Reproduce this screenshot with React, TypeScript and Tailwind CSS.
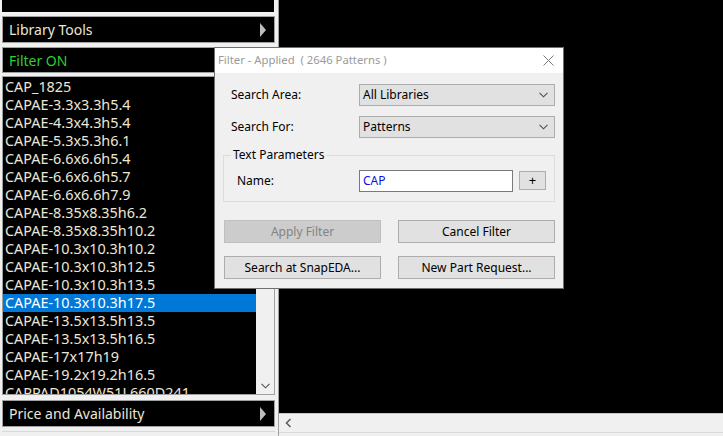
import React from 'react';

const items = [
  'CAP_1825',
  'CAPAE-3.3x3.3h5.4',
  'CAPAE-4.3x4.3h5.4',
  'CAPAE-5.3x5.3h6.1',
  'CAPAE-6.6x6.6h5.4',
  'CAPAE-6.6x6.6h5.7',
  'CAPAE-6.6x6.6h7.9',
  'CAPAE-8.35x8.35h6.2',
  'CAPAE-8.35x8.35h10.2',
  'CAPAE-10.3x10.3h10.2',
  'CAPAE-10.3x10.3h12.5',
  'CAPAE-10.3x10.3h13.5',
  'CAPAE-10.3x10.3h17.5',
  'CAPAE-13.5x13.5h13.5',
  'CAPAE-13.5x13.5h16.5',
  'CAPAE-17x17h19',
  'CAPAE-19.2x19.2h16.5',
  'CAPPAD1054W51L660D241',
];

const SELECTED = 12;

function Arrow() {
  return (
    <svg width="8" height="14" viewBox="0 0 8 14" className="shrink-0">
      <path d="M1 0 L7 7 L1 14 Z" fill="#bdbdbd" />
    </svg>
  );
}

function Chevron({ className = '' }: { className?: string }) {
  return (
    <svg width="9" height="6" viewBox="0 0 9 6" className={className}>
      <path d="M0.5 0.8 L4.5 4.8 L8.5 0.8" fill="none" stroke="#505050" strokeWidth="1.1" />
    </svg>
  );
}

function PanelBox({ label, green, className = '' }: { label: string; green?: boolean; className?: string }) {
  return (
    <div
      className={`flex items-center justify-between bg-black border border-[#a0a0a0] pl-[6px] pr-[7px] ${className}`}
    >
      <span className={`text-[14px] ${green ? 'text-[#2fcf2f]' : 'text-[#ece6d6]'}`}>{label}</span>
      {!green && <Arrow />}
    </div>
  );
}

function Select({ value }: { value: string }) {
  return (
    <div className="flex items-center justify-between w-[196px] h-[22px] bg-[#e1e1e1] border border-[#adadad] pl-[3px] pr-[6px]">
      <span className="text-[12px] text-black">{value}</span>
      <Chevron />
    </div>
  );
}

function Button({ label, disabled }: { label: string; disabled?: boolean }) {
  return (
    <div
      className={`flex items-center justify-center w-[157px] h-[23px] border text-[12px] ${
        disabled ? 'bg-[#cccccc] border-[#bfbfbf] text-[#838383]' : 'bg-[#e1e1e1] border-[#adadad] text-black'
      }`}
    >
      {label}
    </div>
  );
}

export default function App() {
  return (
    <div
      className="relative w-[723px] h-[436px] overflow-hidden bg-[#f0f0f0] flex"
      style={{ fontFamily: '"Noto Sans", "Open Sans", sans-serif' }}
    >
      {/* Left panel */}
      <div className="w-[279px] h-full flex flex-col pl-[2px] pr-[3px] border-r border-[#a0a0a0]">
        <div className="h-[13px] bg-black border-b border-r border-[#f5f5f5]" />
        <PanelBox label="Library Tools" className="mt-[3px] h-[27px]" />
        <PanelBox label="Filter ON" green className="mt-[4px] h-[26px]" />

        {/* Pattern list */}
        <div className="mt-[3px] h-[319px] flex border border-[#a0a0a0]">
          <div className="flex-1 bg-black pt-[1px] overflow-hidden">
            {items.map((it, i) => (
              <div
                key={it}
                className={`h-[18px] leading-[18px] pl-[2px] text-[14.4px] whitespace-nowrap ${
                  i === SELECTED ? 'bg-[#0078d7] text-white' : 'text-[#ece6d6]'
                }`}
              >
                {it}
              </div>
            ))}
          </div>
          <div className="w-[18px] bg-[#f0f0f0] flex flex-col justify-end items-center pb-[5px]">
            <Chevron />
          </div>
        </div>

        <PanelBox label="Price and Availability" className="mt-[5px] h-[27px]" />
        <div className="mt-[4px] border-t border-[#dadada]" />
      </div>

      {/* Canvas */}
      <div className="flex-1 flex flex-col">
        <div className="flex-1 bg-black" />
        <div className="h-[19px] bg-[#f0f0f0] border-t border-[#c8c8c8] flex items-center pl-[6px]">
          <svg width="7" height="10" viewBox="0 0 7 10">
            <path d="M5.5 1 L1.5 5 L5.5 9" fill="none" stroke="#606060" strokeWidth="1.6" />
          </svg>
        </div>
        <div className="h-[4px] bg-[#f0f0f0] border-t border-[#dadada]" />
      </div>

      {/* Filter dialog */}
      <div className="absolute left-[214px] top-[47px] w-[350px] h-[242px] border border-[#707070] bg-[#f0f0f0] flex flex-col">
        <div className="h-[25px] bg-white flex items-center justify-between pl-[3px] pr-[9px]">
          <span className="text-[11.3px] text-[#9a9a9a] whitespace-pre">Filter - Applied  ( 2646 Patterns )</span>
          <svg width="11" height="11" viewBox="0 0 11 11">
            <path d="M0.5 0.5 L10.5 10.5 M10.5 0.5 L0.5 10.5" stroke="#7a7a7a" strokeWidth="1" />
          </svg>
        </div>

        <div className="flex flex-col pl-[8px] pr-[8px] pt-[11px]">
          <div className="flex items-center justify-between">
            <span className="pl-[8px] text-[12px] text-black">Search Area:</span>
            <Select value="All Libraries" />
          </div>
          <div className="flex items-center justify-between mt-[10px]">
            <span className="pl-[8px] text-[12px] text-black">Search For:</span>
            <Select value="Patterns" />
          </div>

          <div className="relative mt-[17px] h-[47px] border border-[#dcdcdc] flex items-center justify-between pl-[13px] pr-[8px]">
            <span className="absolute left-[7px] top-[-10px] bg-[#f0f0f0] px-[2px] text-[12px] text-black leading-[18px]">
              Text Parameters
            </span>
            <span className="text-[12px] text-black mt-[4px]">Name:</span>
            <div className="flex items-center gap-[6px] mt-[4px]">
              <div className="w-[154px] h-[22px] bg-white border border-[#7a7a7a] flex items-center pl-[3px]">
                <span className="text-[12px] text-[#1010e0]">CAP</span>
              </div>
              <div className="w-[27px] h-[19px] bg-[#e1e1e1] border border-[#adadad] flex items-center justify-center text-[13px] text-black">
                +
              </div>
            </div>
          </div>

          <div className="flex justify-between mt-[18px] pl-[1px]">
            <Button label="Apply Filter" disabled />
            <Button label="Cancel Filter" />
          </div>
          <div className="flex justify-between mt-[13px] pl-[1px]">
            <Button label="Search at SnapEDA..." />
            <Button label="New Part Request..." />
          </div>
        </div>
      </div>
    </div>
  );
}
